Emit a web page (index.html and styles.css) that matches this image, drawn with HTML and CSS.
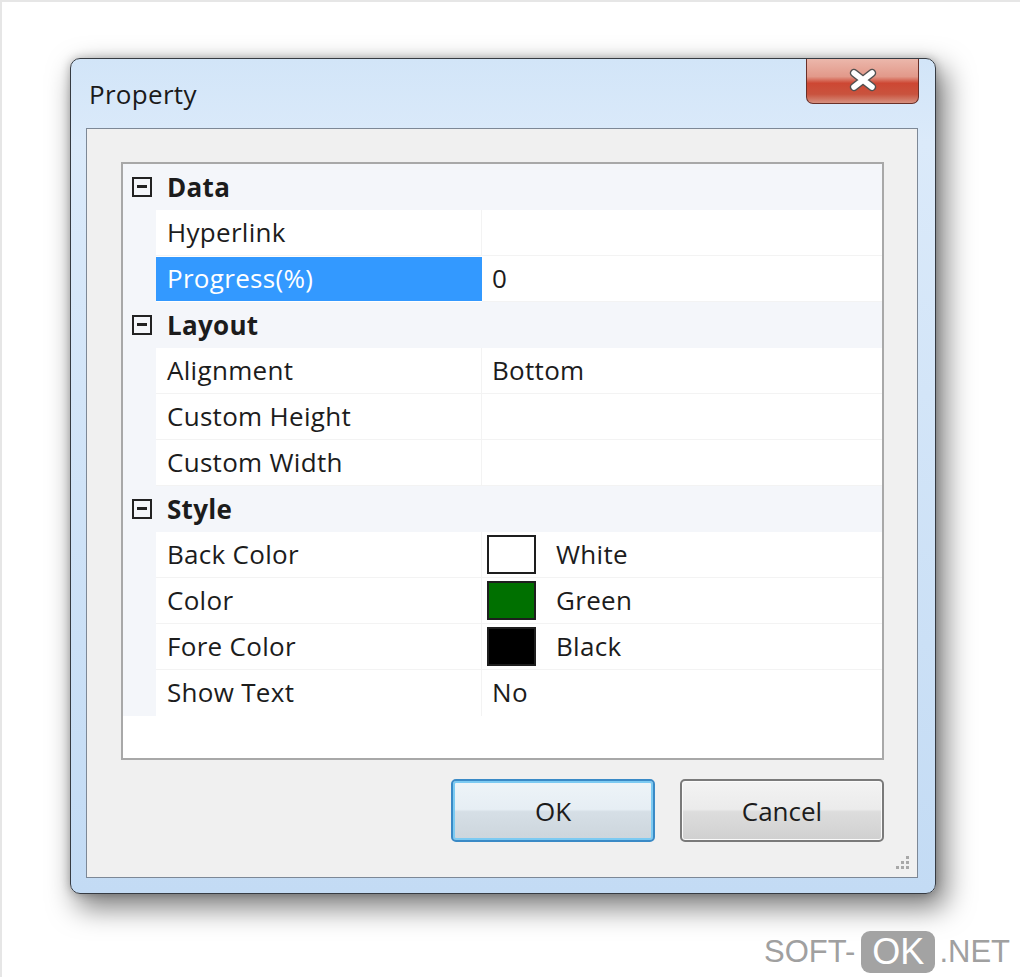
FILE: index.html
```html
<!DOCTYPE html>
<html>
<head>
<meta charset="utf-8">
<link rel="stylesheet" href="styles.css">
</head>
<body>
<div class="page">
  <div class="window">
    <div class="titlebar">
      <div class="title">Property</div>
      <div class="close">
        <svg width="32" height="26" viewBox="0 0 32 26">
          <path d="M7 6 L25 20 M25 6 L7 20" stroke="#505050" stroke-width="8.5" stroke-linecap="round"/>
          <path d="M7 6 L25 20 M25 6 L7 20" stroke="#ffffff" stroke-width="5.5" stroke-linecap="round"/>
        </svg>
      </div>
    </div>
    <div class="client">
      <div class="grid">
        <div class="row cat"><div class="margin"><span class="minus"></span></div><div class="catname">Data</div></div>
        <div class="row"><div class="margin"></div><div class="name">Hyperlink</div><div class="value"></div></div>
        <div class="row"><div class="margin"></div><div class="name selected">Progress(%)</div><div class="value">0</div></div>
        <div class="row cat"><div class="margin"><span class="minus"></span></div><div class="catname">Layout</div></div>
        <div class="row"><div class="margin"></div><div class="name">Alignment</div><div class="value">Bottom</div></div>
        <div class="row"><div class="margin"></div><div class="name">Custom Height</div><div class="value"></div></div>
        <div class="row"><div class="margin"></div><div class="name">Custom Width</div><div class="value"></div></div>
        <div class="row cat"><div class="margin"><span class="minus"></span></div><div class="catname">Style</div></div>
        <div class="row"><div class="margin"></div><div class="name">Back Color</div><div class="value swval"><span class="swatch sw-white"></span>White</div></div>
        <div class="row"><div class="margin"></div><div class="name">Color</div><div class="value swval"><span class="swatch sw-green"></span>Green</div></div>
        <div class="row"><div class="margin"></div><div class="name">Fore Color</div><div class="value swval"><span class="swatch sw-black"></span>Black</div></div>
        <div class="row last"><div class="margin"></div><div class="name">Show Text</div><div class="value">No</div></div>
      </div>
      <div class="buttons">
        <div class="btn default">OK</div>
        <div class="btn">Cancel</div>
      </div>
      <svg class="grip" width="18" height="18" viewBox="0 0 18 18">
        <rect x="13" y="1" width="3" height="3" fill="#a8a8a8"/>
        <rect x="8" y="6" width="3" height="3" fill="#a8a8a8"/>
        <rect x="13" y="6" width="3" height="3" fill="#a8a8a8"/>
        <rect x="3" y="11" width="3" height="3" fill="#a8a8a8"/>
        <rect x="8" y="11" width="3" height="3" fill="#a8a8a8"/>
        <rect x="13" y="11" width="3" height="3" fill="#a8a8a8"/>
      </svg>
    </div>
  </div>
  <div class="watermark"><span>SOFT-</span><span class="okbox">OK</span><span>.NET</span></div>
</div>
</body>
</html>
```

FILE: styles.css
```css
html, body {
  margin: 0;
  padding: 0;
  background: #ffffff;
}
.page {
  position: relative;
  width: 1020px;
  height: 977px;
  box-sizing: border-box;
  border-top: 2px solid #e6e6e6;
  border-left: 2px solid #e6e6e6;
  padding-left: 68px;
  padding-top: 56px;
  font-family: "Open Sans", "DejaVu Sans", sans-serif;
  overflow: hidden;
}
.window {
  width: 866px;
  height: 836px;
  box-sizing: border-box;
  border: 1px solid #363b42;
  border-radius: 10px;
  background: linear-gradient(to bottom, #d2e5f8 0%, #dbeafa 10%, #c3dbf4 100%);
  box-shadow: 8px 12px 28px 2px rgba(0, 0, 0, 0.5), 0 0 10px rgba(0, 0, 0, 0.25);
  display: flex;
  flex-direction: column;
}
.titlebar {
  height: 69px;
  display: flex;
  justify-content: space-between;
  align-items: flex-start;
  padding-left: 18px;
  padding-right: 16px;
}
.title {
  margin-top: 17px;
  font-size: 26px;
  color: #1a1a1a;
  letter-spacing: 0.3px;
}
.close {
  width: 113px;
  height: 45px;
  box-sizing: border-box;
  border: 1px solid #6a3028;
  border-top: none;
  border-radius: 0 0 7px 7px;
  background: linear-gradient(to bottom, #ebb7ab 0%, #e2998a 40%, #cd4733 55%, #c9533e 80%, #d6907f 100%);
  display: flex;
  justify-content: center;
  align-items: center;
  padding-bottom: 2px;
}
.client {
  position: relative;
  margin-left: 15px;
  width: 832px;
  height: 750px;
  box-sizing: border-box;
  border: 1px solid #7d8896;
  background: #f0f0f0;
  padding: 33px 0 0 34px;
}
.grid {
  width: 763px;
  height: 598px;
  box-sizing: border-box;
  border: 2px solid #a8a8a8;
  background: #ffffff;
  display: flex;
  flex-direction: column;
}
.row {
  display: flex;
  height: 46px;
  font-size: 26px;
  color: #1c1c1c;
  letter-spacing: 0.3px;
}
.row .margin {
  width: 33px;
  flex: none;
  background: #f4f6fa;
  display: flex;
  align-items: center;
  justify-content: center;
}
.cat {
  background: #f4f6fa;
}
.catname {
  padding-left: 11px;
  line-height: 46px;
  font-weight: 700;
}
.minus {
  position: relative;
  width: 20px;
  height: 20px;
  box-sizing: border-box;
  border: 2px solid #222;
  margin-left: 5px;
}
.minus::after {
  content: "";
  position: absolute;
  left: 3px;
  right: 3px;
  top: 6px;
  height: 3px;
  background: #222;
}
.name {
  width: 326px;
  flex: none;
  box-sizing: border-box;
  padding-left: 11px;
  line-height: 45px;
  border-bottom: 1px solid #f3f3f3;
  border-right: 1px solid #f3f3f3;
}
.name.selected {
  background: #3399ff;
  color: #ffffff;
  border-color: #3399ff;
  margin-top: 1px;
  height: 44px;
  line-height: 43px;
}
.value {
  flex: 1;
  box-sizing: border-box;
  padding-left: 10px;
  line-height: 45px;
  border-bottom: 1px solid #f3f3f3;
}
.last .name, .last .value {
  border-bottom: none;
}
.swval {
  display: flex;
  align-items: center;
  padding-left: 5px;
}
.swatch {
  width: 49px;
  height: 39px;
  box-sizing: border-box;
  border: 2px solid #1e1e1e;
  margin-right: 20px;
}
.sw-white { background: #ffffff; }
.sw-green { background: #007000; }
.sw-black { background: #000000; }
.buttons {
  width: 763px;
  display: flex;
  justify-content: flex-end;
  gap: 25px;
  margin-top: 19px;
}
.btn {
  width: 204px;
  height: 63px;
  box-sizing: border-box;
  border: 2px solid #7a7a7a;
  border-radius: 5px;
  background: linear-gradient(to bottom, #f3f3f3 0%, #ebebeb 48%, #dddddd 52%, #d0d0d0 100%);
  display: flex;
  align-items: center;
  justify-content: center;
  font-size: 26px;
  color: #1c1c1c;
  box-shadow: inset 0 0 0 1px #fbfbfb;
}
.btn.default {
  border-color: #3a8ac6;
  box-shadow: inset 0 0 0 2px #7ccaf2;
  background: linear-gradient(to bottom, #eef4f8 0%, #e6eef4 48%, #d6dfe6 52%, #ccd5dc 100%);
}
.grip {
  position: absolute;
  right: 6px;
  bottom: 4px;
}
.watermark {
  position: absolute;
  right: 10px;
  bottom: 4px;
  display: flex;
  align-items: center;
  font-family: "Liberation Sans", Arial, sans-serif;
  font-size: 31px;
  color: #a0a0a0;
}
.okbox {
  background: #a3a3a3;
  color: #ffffff;
  border-radius: 9px;
  padding: 0 11px;
  margin: 0 4px 0 6px;
  line-height: 42px;
  height: 42px;
  font-size: 36px;
}
```
